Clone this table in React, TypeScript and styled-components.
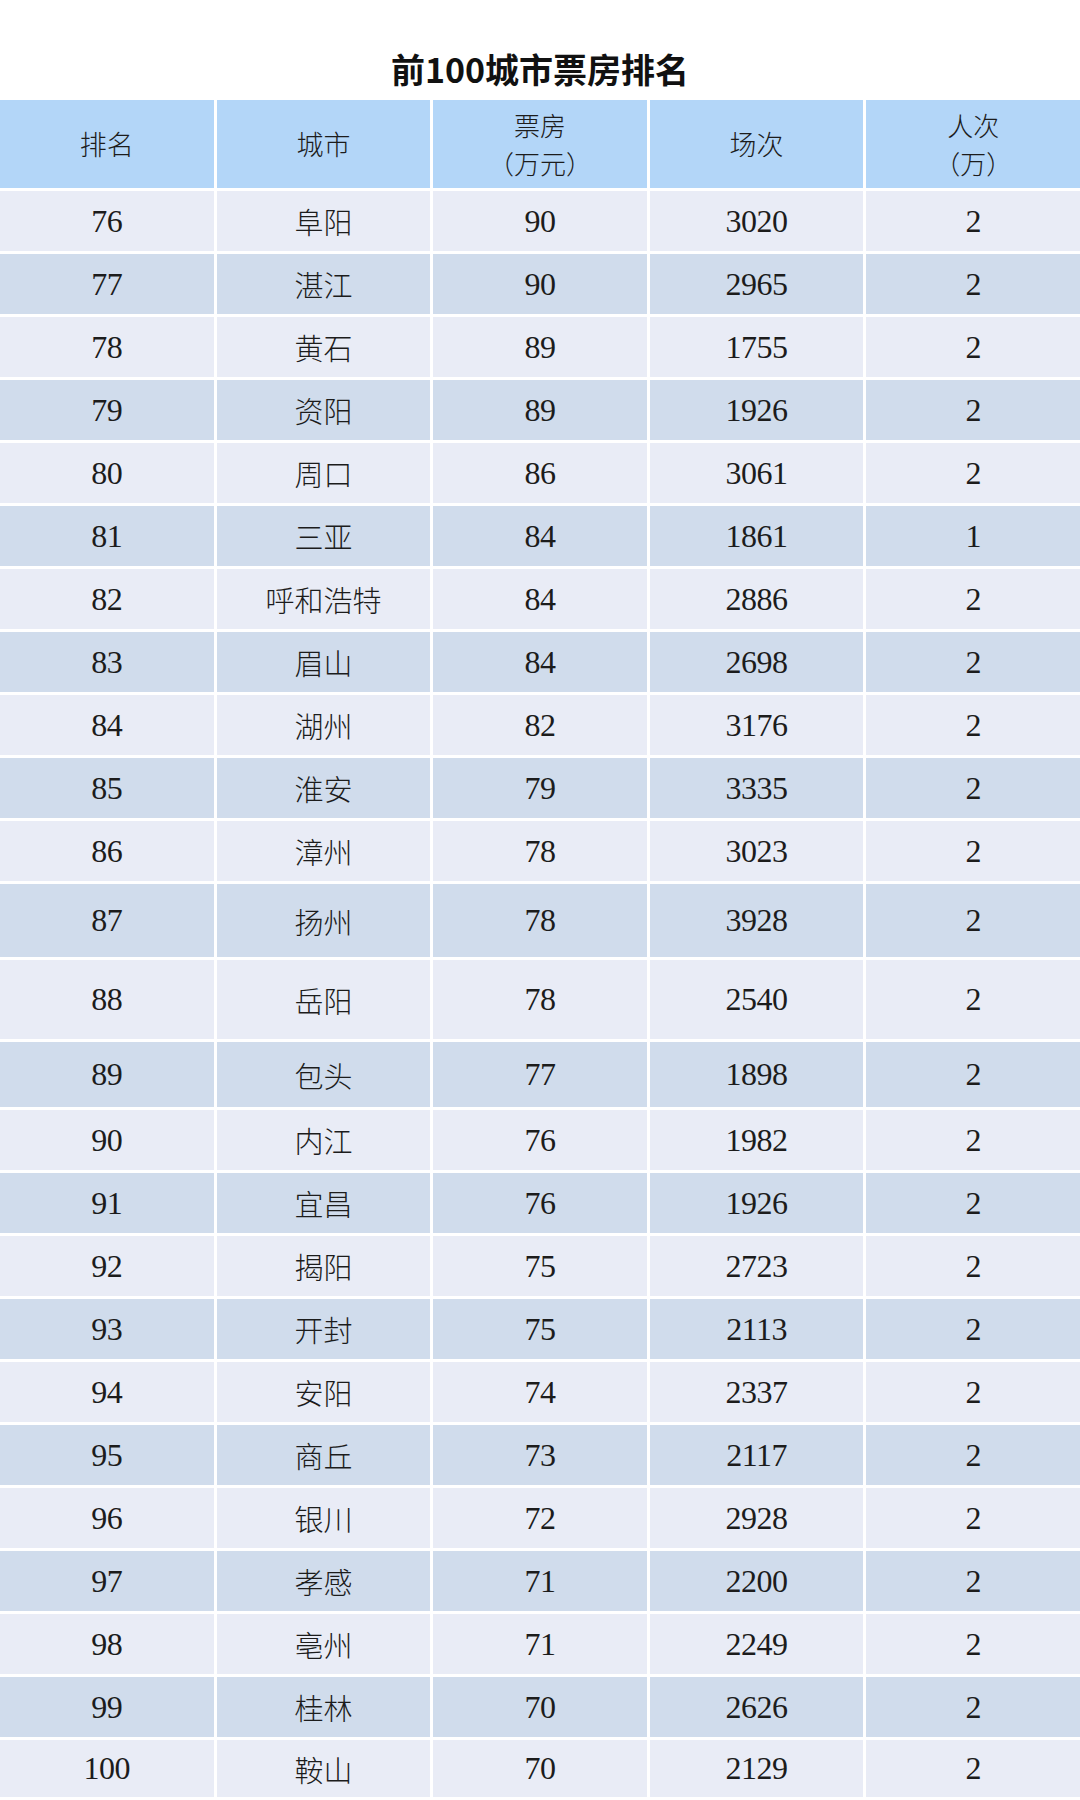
import styled, { createGlobalStyle } from 'styled-components';

const GlobalStyle = createGlobalStyle`
  body {
    margin: 0;
    background: #ffffff;
  }
`;

type Row = {
  rank: number;
  city: string;
  box: number;
  shows: number;
  people: number;
  height?: number;
};

const rows: Row[] = [
  { rank: 76, city: '阜阳', box: 90, shows: 3020, people: 2 },
  { rank: 77, city: '湛江', box: 90, shows: 2965, people: 2 },
  { rank: 78, city: '黄石', box: 89, shows: 1755, people: 2 },
  { rank: 79, city: '资阳', box: 89, shows: 1926, people: 2 },
  { rank: 80, city: '周口', box: 86, shows: 3061, people: 2 },
  { rank: 81, city: '三亚', box: 84, shows: 1861, people: 1 },
  { rank: 82, city: '呼和浩特', box: 84, shows: 2886, people: 2 },
  { rank: 83, city: '眉山', box: 84, shows: 2698, people: 2 },
  { rank: 84, city: '湖州', box: 82, shows: 3176, people: 2 },
  { rank: 85, city: '淮安', box: 79, shows: 3335, people: 2 },
  { rank: 86, city: '漳州', box: 78, shows: 3023, people: 2 },
  { rank: 87, city: '扬州', box: 78, shows: 3928, people: 2, height: 73 },
  { rank: 88, city: '岳阳', box: 78, shows: 2540, people: 2, height: 79 },
  { rank: 89, city: '包头', box: 77, shows: 1898, people: 2, height: 65 },
  { rank: 90, city: '内江', box: 76, shows: 1982, people: 2 },
  { rank: 91, city: '宜昌', box: 76, shows: 1926, people: 2 },
  { rank: 92, city: '揭阳', box: 75, shows: 2723, people: 2 },
  { rank: 93, city: '开封', box: 75, shows: 2113, people: 2 },
  { rank: 94, city: '安阳', box: 74, shows: 2337, people: 2 },
  { rank: 95, city: '商丘', box: 73, shows: 2117, people: 2 },
  { rank: 96, city: '银川', box: 72, shows: 2928, people: 2 },
  { rank: 97, city: '孝感', box: 71, shows: 2200, people: 2 },
  { rank: 98, city: '亳州', box: 71, shows: 2249, people: 2 },
  { rank: 99, city: '桂林', box: 70, shows: 2626, people: 2 },
  { rank: 100, city: '鞍山', box: 70, shows: 2129, people: 2, height: 57 },
];

export default function App() {
  return (
    <Page>
      <GlobalStyle />
      <Title>前100城市票房排名</Title>
      <Table>
        <HeaderRow>
          <HeadCell>排名</HeadCell>
          <HeadCell>城市</HeadCell>
          <HeadCell>
            <HeadLine>票房</HeadLine>
            <HeadLine>（万元）</HeadLine>
          </HeadCell>
          <HeadCell>场次</HeadCell>
          <HeadCell>
            <HeadLine>人次</HeadLine>
            <HeadLine>（万）</HeadLine>
          </HeadCell>
        </HeaderRow>
        {rows.map((row, index) => (
          <BodyRow key={row.rank} $height={row.height ?? 60}>
            <Cell $even={index % 2 === 1}>{row.rank}</Cell>
            <Cell $even={index % 2 === 1} $cjk>
              {row.city}
            </Cell>
            <Cell $even={index % 2 === 1}>{row.box}</Cell>
            <Cell $even={index % 2 === 1}>{row.shows}</Cell>
            <Cell $even={index % 2 === 1}>{row.people}</Cell>
          </BodyRow>
        ))}
      </Table>
    </Page>
  );
}

const Page = styled.div`
  width: 1080px;
  background: #ffffff;
`;

const Title = styled.h1`
  margin: 0;
  height: 100px;
  box-sizing: border-box;
  display: flex;
  align-items: flex-end;
  justify-content: center;
  padding-bottom: 14px;
  font-family: 'Noto Sans CJK SC', 'Noto Sans', sans-serif;
  font-size: 34px;
  line-height: 34px;
  font-weight: 700;
  color: #111111;
`;

const Table = styled.div`
  display: flex;
  flex-direction: column;
  gap: 3px;
`;

const HeaderRow = styled.div`
  display: grid;
  grid-template-columns: repeat(5, 1fr);
  column-gap: 3px;
  height: 88px;
`;

const HeadCell = styled.div`
  display: flex;
  flex-direction: column;
  align-items: center;
  justify-content: center;
  background: #b3d6f8;
  font-family: 'Noto Sans CJK SC', sans-serif;
  font-size: 27px;
  line-height: 38px;
  font-weight: 300;
  color: #1c1c1c;
`;

const HeadLine = styled.span`
  display: block;
  font-size: 26px;
  line-height: 38px;
`;

const BodyRow = styled.div<{ $height: number }>`
  display: grid;
  grid-template-columns: repeat(5, 1fr);
  column-gap: 3px;
  height: ${(p) => p.$height}px;
`;

const Cell = styled.div<{ $even?: boolean; $cjk?: boolean }>`
  display: flex;
  align-items: center;
  justify-content: center;
  background: ${(p) => (p.$even ? '#d0dcec' : '#e9ecf6')};
  font-family: ${(p) =>
    p.$cjk ? "'Noto Sans CJK SC', sans-serif" : "'Liberation Serif', 'Noto Sans CJK SC', serif"};
  font-size: ${(p) => (p.$cjk ? '29px' : '32px')};
  font-weight: ${(p) => (p.$cjk ? 300 : 400)};
  letter-spacing: ${(p) => (p.$cjk ? '0' : '-0.5px')};
  color: #1c1c1c;
`;
